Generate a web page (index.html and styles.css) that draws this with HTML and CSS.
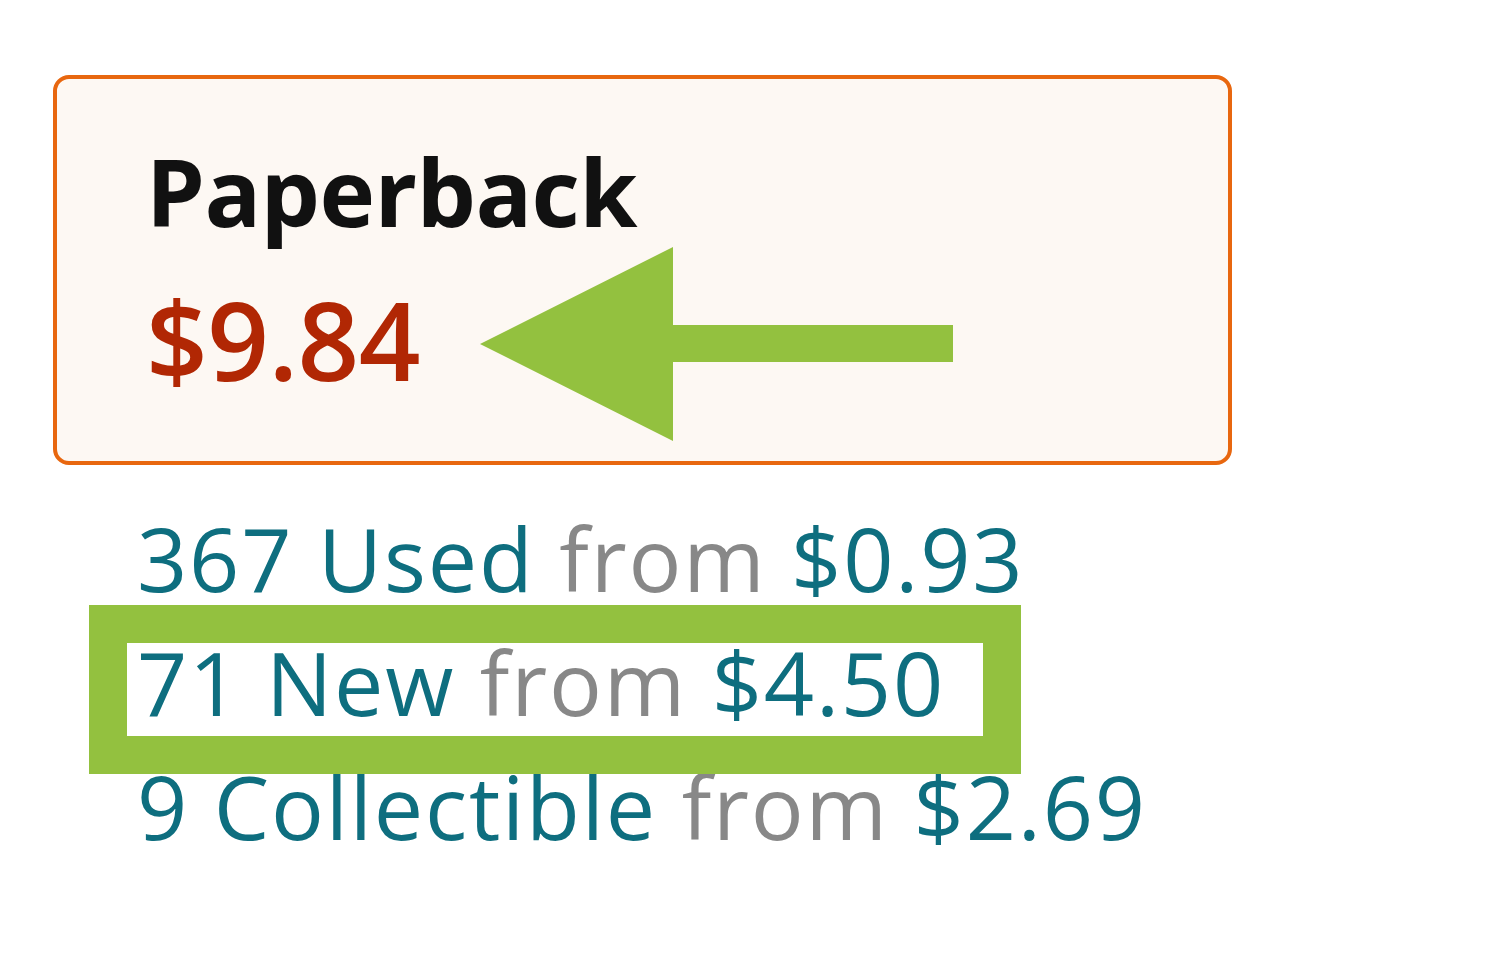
FILE: index.html
```html
<!DOCTYPE html>
<html lang="en">
  <head>
    <meta charset="UTF-8" />
    <title>Paperback offers</title>
    <link rel="stylesheet" href="styles.css">
  </head>
  <body>
    <div class="page">
      <!-- Selected format -->
      <div class="format-box">
        <div class="format-name">Paperback</div>
        <div class="format-price">$9.84</div>
        <svg class="arrow" width="480" height="196" viewBox="0 0 480 196">
          <polygon points="0,97 193,0 193,78 473,78 473,115 193,115 193,194" fill="#93c13f" />
        </svg>
      </div>

      <!-- Other offers -->
      <div class="offers">
        <div class="offer"><a href="#">367 Used</a> <span class="from">from</span> <a href="#">$0.93</a></div>
        <div class="offer"><a href="#">71 New</a> <span class="from">from</span> <a href="#">$4.50</a></div>
        <div class="offer"><a href="#">9 Collectible</a> <span class="from">from</span> <a href="#">$2.69</a></div>
        <div class="highlight"></div>
      </div>
    </div>
  </body>
</html>
```

FILE: styles.css
```css
* {
  margin: 0;
  padding: 0;
  box-sizing: border-box;
}

body {
  font-family: "Open Sans", "Noto Sans", sans-serif;
  background-color: #fff;
}

.page {
  padding: 75px 0 0 53px;
}

.format-box {
  position: relative;
  width: 1179px;
  height: 390px;
  padding: 52px 0 0 89px;
  border: 4px solid #e8670f;
  border-radius: 16px;
  background-color: #fdf8f3;
}

.format-name {
  font-size: 94px;
  font-weight: 700;
  line-height: 120px;
  color: #111;
  letter-spacing: -0.6px;
}

.format-price {
  margin-top: 34px;
  font-size: 108px;
  font-weight: 600;
  line-height: 110px;
  color: #b12704;
  letter-spacing: -0.5px;
}

.arrow {
  position: absolute;
  left: 423px;
  top: 168px;
}

.offers {
  position: relative;
  padding: 31px 0 0 84px;
}

.offer {
  font-size: 88px;
  line-height: 124px;
  color: #0e6e7f;
  letter-spacing: 1.8px;
}

.offer a {
  color: #0e6e7f;
  text-decoration: none;
}

.offer .from {
  color: #888;
}

.highlight {
  position: absolute;
  left: 36px;
  top: 140px;
  width: 932px;
  height: 169px;
  border: 38px solid #93c13f;
}
```
